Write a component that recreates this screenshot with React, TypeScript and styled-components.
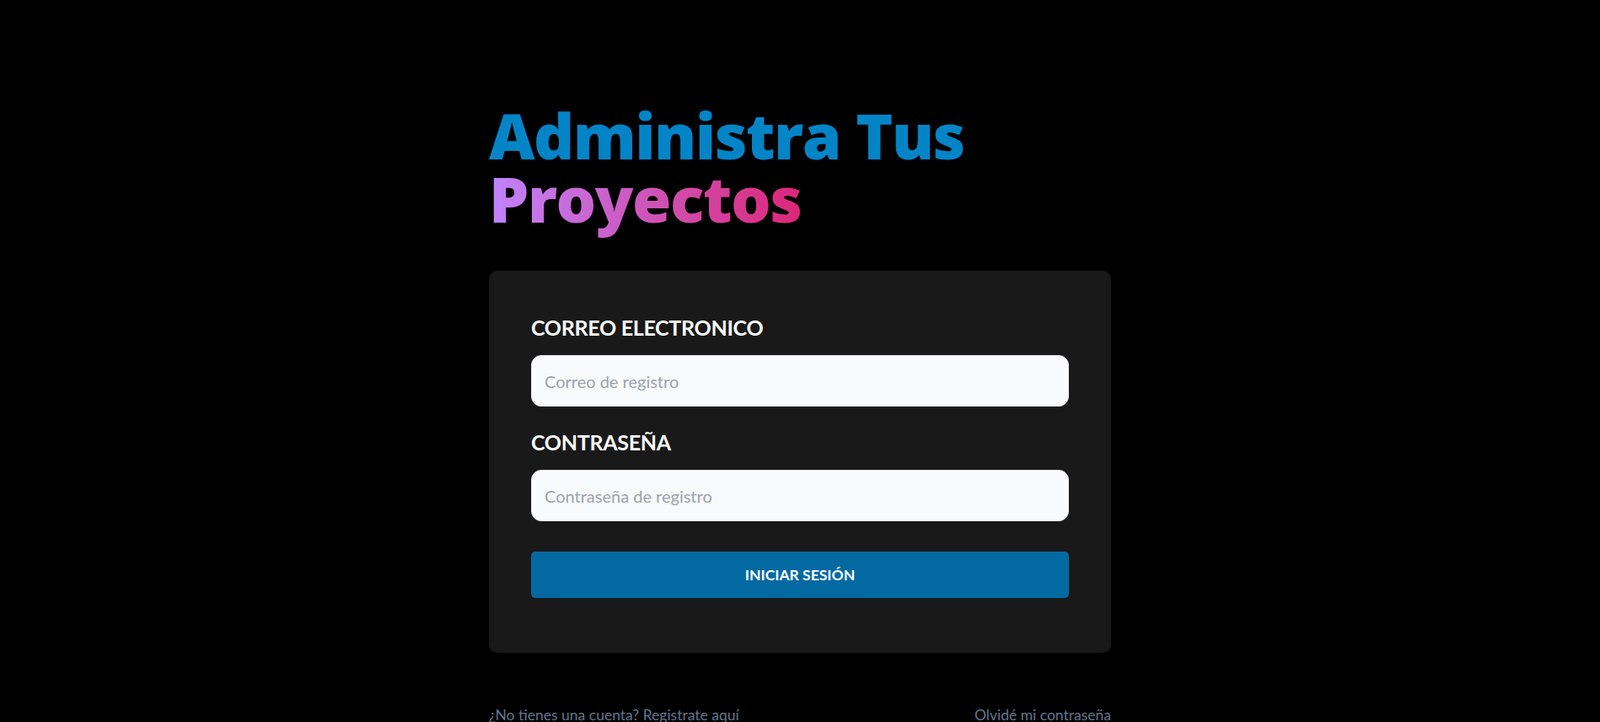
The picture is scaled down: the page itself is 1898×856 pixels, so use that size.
import React from 'react';
import styled, { createGlobalStyle } from 'styled-components';

const GlobalStyle = createGlobalStyle`
  * {
    box-sizing: border-box;
  }
  body {
    margin: 0;
    background-color: #000;
    font-family: Lato, "Open Sans", sans-serif;
  }
`;

const Main = styled.main`
  width: 738px;
  margin: 0 auto;
  padding-top: 123px;
`;

const Title = styled.h1`
  margin: 0;
  font-family: "Open Sans", Lato, sans-serif;
  font-size: 75px;
  line-height: 75px;
  font-weight: 800;
  letter-spacing: -1.5px;
  color: #0284c7;
`;

const Highlight = styled.span`
  background: linear-gradient(to right, #c084fc, #db2777);
  -webkit-background-clip: text;
  background-clip: text;
  color: transparent;
`;

const Card = styled.form`
  margin-top: 48px;
  background-color: #191919;
  border-radius: 10px;
  padding: 50px 50px 65px;
  box-shadow: 0 1px 3px rgba(0, 0, 0, 0.1);
`;

const Field = styled.div<{ last?: boolean }>`
  margin-bottom: ${(props) => (props.last ? '36px' : '25px')};
`;

const Label = styled.label`
  display: block;
  color: #fff;
  font-size: 25px;
  line-height: 35px;
  font-weight: 700;
  letter-spacing: -0.3px;
  text-transform: uppercase;
`;

const Input = styled.input`
  display: block;
  width: 100%;
  height: 61px;
  margin-top: 15px;
  padding: 0 15px;
  border: 1px solid #e5e7eb;
  border-radius: 12px;
  background-color: #f9fafb;
  font-family: inherit;
  font-size: 20px;
  color: #111827;
  outline: none;

  &::placeholder {
    color: #9ca3af;
  }
`;

const SubmitButton = styled.button`
  display: block;
  width: 100%;
  height: 55px;
  border: none;
  border-radius: 5px;
  background-color: #0369a1;
  color: #fff;
  font-family: inherit;
  font-size: 17.5px;
  font-weight: 700;
  text-transform: uppercase;
  cursor: pointer;
`;

const Links = styled.nav`
  display: flex;
  justify-content: space-between;
  margin-top: 61px;
`;

const FooterLink = styled.a`
  color: #64748b;
  font-size: 17.5px;
  line-height: 25px;
  text-decoration: none;
`;

const App = () => {
  return (
    <>
      <GlobalStyle />
      <Main>
        <Title>
          Administra Tus <Highlight>Proyectos</Highlight>
        </Title>
        <Card onSubmit={(e) => e.preventDefault()}>
          <Field>
            <Label htmlFor="email">Correo Electronico</Label>
            <Input id="email" type="email" placeholder="Correo de registro" />
          </Field>
          <Field last>
            <Label htmlFor="password">Contraseña</Label>
            <Input id="password" type="password" placeholder="Contraseña de registro" />
          </Field>
          <SubmitButton type="submit">Iniciar Sesión</SubmitButton>
        </Card>
        <Links>
          <FooterLink href="#">¿No tienes una cuenta? Registrate aquí</FooterLink>
          <FooterLink href="#">Olvidé mi contraseña</FooterLink>
        </Links>
      </Main>
    </>
  );
};

export default App;
